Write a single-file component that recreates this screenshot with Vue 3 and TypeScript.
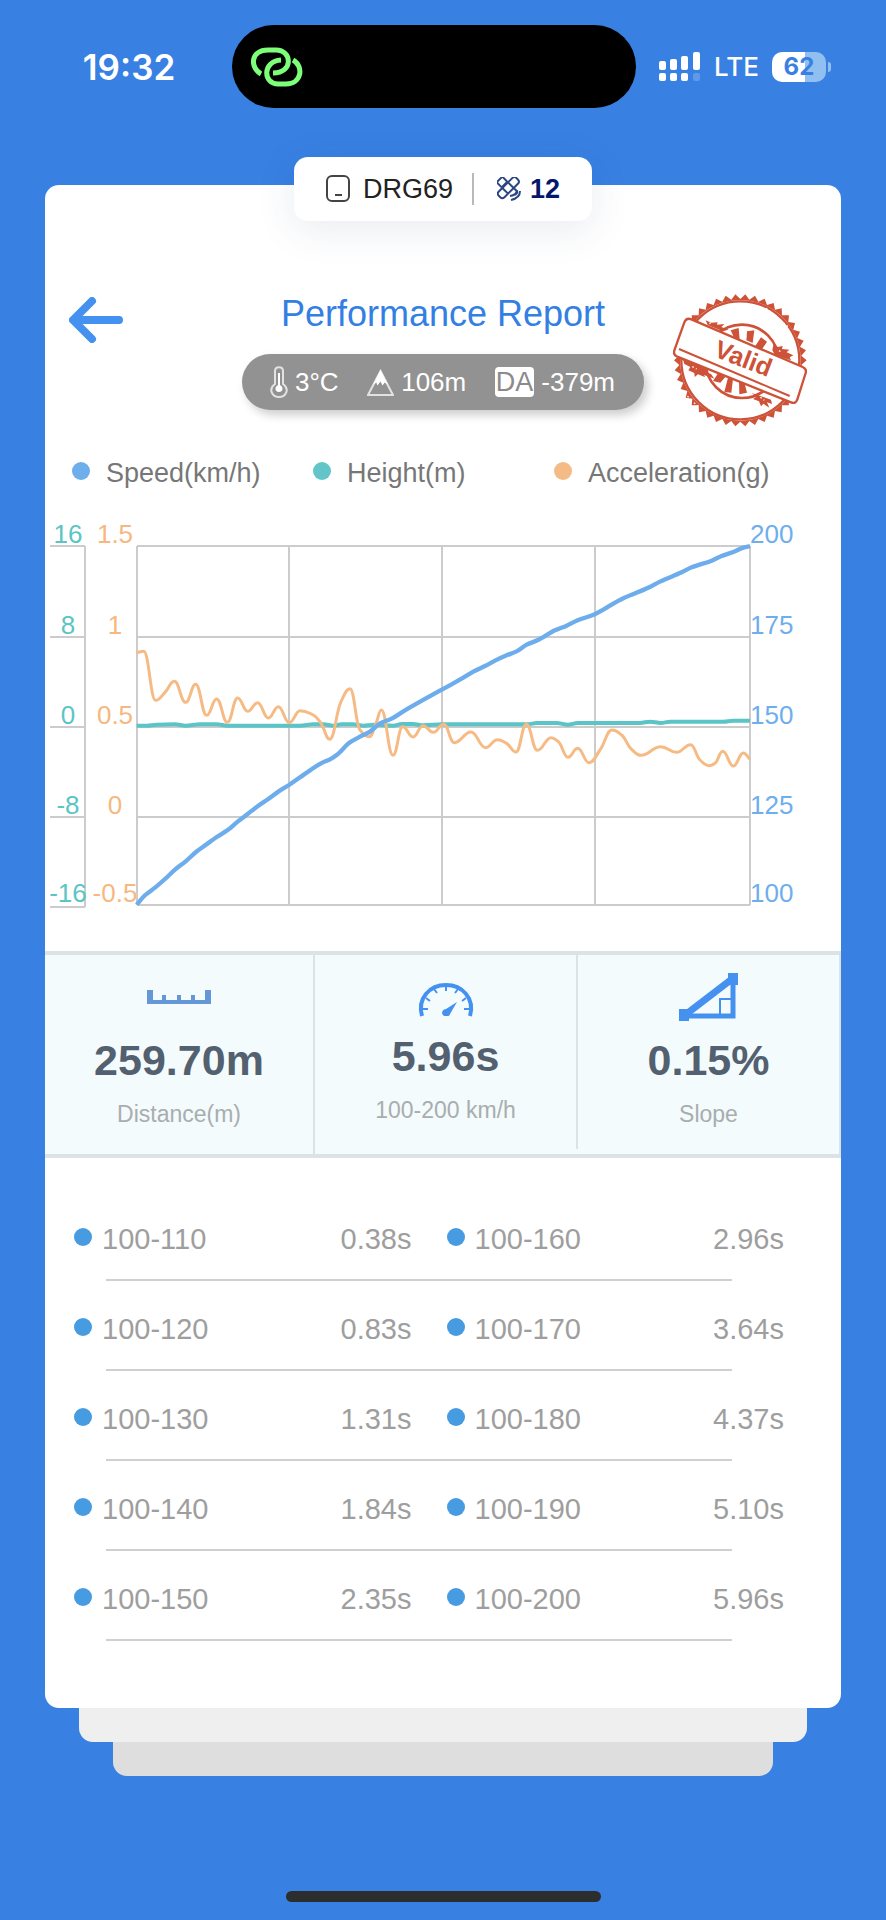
<script setup lang="ts">
interface Split {
  range: string
  time: string
}

const legend = [
  { name: 'Speed(km/h)', tone: 'speed' },
  { name: 'Height(m)', tone: 'height' },
  { name: 'Acceleration(g)', tone: 'accel' },
]

const axisRows = [
  { y: 36, height: '16', accel: '1.5', speed: '200' },
  { y: 127, height: '8', accel: '1', speed: '175' },
  { y: 217, height: '0', accel: '0.5', speed: '150' },
  { y: 307, height: '-8', accel: '0', speed: '125' },
  { y: 395, height: '-16', accel: '-0.5', speed: '100' },
]

const columnLines = [92, 244, 397, 550, 705]

const splits: [Split, Split][] = [
  [{ range: '100-110', time: '0.38s' }, { range: '100-160', time: '2.96s' }],
  [{ range: '100-120', time: '0.83s' }, { range: '100-170', time: '3.64s' }],
  [{ range: '100-130', time: '1.31s' }, { range: '100-180', time: '4.37s' }],
  [{ range: '100-140', time: '1.84s' }, { range: '100-190', time: '5.10s' }],
  [{ range: '100-150', time: '2.35s' }, { range: '100-200', time: '5.96s' }],
]

// Series samples as x, y pairs on a canvas three times finer than the chart grid.
const speed = [
  275, 1184, 301, 1155, 330, 1133, 360, 1107, 390, 1079, 422, 1054, 453, 1026, 485, 1003, 515, 981, 547, 961,
  578, 935, 608, 912, 640, 887, 670, 867, 701, 844, 732, 825, 765, 802, 795, 781, 828, 760, 855, 748, 875, 735,
  915, 697, 945, 680, 975, 665, 1005, 640, 1040, 626, 1075, 604, 1192, 538, 1225, 520, 1255, 503, 1285, 485,
  1320, 468, 1350, 452, 1385, 436, 1413, 425, 1445, 404, 1477, 391, 1530, 361, 1565, 347, 1598, 331, 1649, 313,
  1675, 299, 1705, 281, 1735, 265, 1813, 232, 1845, 215, 1910, 187, 1940, 172, 2000, 152, 2030, 138, 2065, 126,
  2095, 113, 2115, 108,
]
const height = [
  275, 647, 305, 647, 335, 644, 390, 643, 422, 647, 465, 643, 515, 643, 547, 647, 765, 647, 805, 643, 835, 643,
  865, 647, 890, 643, 925, 643, 955, 647, 985, 644, 1045, 647, 1070, 642, 1105, 642, 1135, 646, 1192, 643,
  1450, 643, 1475, 639, 1535, 639, 1569, 644, 1598, 639, 1785, 639, 1815, 635, 1847, 639, 1875, 635, 2035, 635,
  2065, 632, 2115, 632,
]
const accel = [
  275, 428, 296, 424, 332, 571, 360, 547, 388, 514, 422, 577, 452, 523, 485, 616, 515, 567, 547, 637, 578, 564,
  608, 604, 638, 578, 670, 624, 700, 590, 733, 638, 765, 602, 805, 615, 828, 640, 854, 688, 888, 575, 915, 536,
  945, 660, 973, 680, 993, 640, 1009, 600, 1044, 736, 1073, 650, 1104, 681, 1134, 647, 1165, 667, 1196, 643,
  1228, 698, 1278, 666, 1322, 713, 1357, 689, 1385, 700, 1413, 726, 1444, 643, 1477, 721, 1518, 683, 1540, 695,
  1569, 742, 1598, 715, 1632, 758, 1665, 720, 1701, 660, 1730, 675, 1757, 715, 1788, 736, 1847, 710, 1895, 727,
  1937, 704, 1965, 750, 1992, 767, 2010, 760, 2033, 724, 2065, 768, 2095, 729, 2115, 748,
]

// Monotone cubic interpolation, so peaks stay at their samples; a larger reach rounds them more.
function smooth(flat: number[], reach: number): string {
  const n = flat.length / 2
  const x = (i: number) => flat[i * 2]
  const y = (i: number) => flat[i * 2 + 1]
  const slope = (i: number) => (y(i + 1) - y(i)) / (x(i + 1) - x(i))
  const tangent = (i: number): number => {
    if (i === 0) return slope(0)
    if (i === n - 1) return slope(n - 2)
    const a = slope(i - 1)
    const b = slope(i)
    return a * b <= 0 ? 0 : (2 * a * b) / (a + b)
  }
  let d = `M${x(0)} ${y(0)}`
  for (let i = 0; i < n - 1; i++) {
    const h = (x(i + 1) - x(i)) * reach
    d += `C${x(i) + h} ${y(i) + tangent(i) * h} ${x(i + 1) - h} ${y(i + 1) - tangent(i + 1) * h} ${x(i + 1)} ${y(i + 1)}`
  }
  return d
}

const speedPath = smooth(speed, 0.33)
const heightPath = smooth(height, 0.33)
const accelPath = smooth(accel, 0.44)

// Saw-tooth rim of the stamp.
const teeth = Array.from({ length: 84 }, (_, i) => {
  const angle = (i / 84) * Math.PI * 2
  const r = i % 2 ? 184 : 199
  return `${Math.round(238 + r * Math.cos(angle))},${Math.round(240 + r * Math.sin(angle))}`
}).join(' ')
</script>

<template>
  <div class="screen">
    <header class="status">
      <time class="clock">19:32</time>
      <div class="island">
        <svg class="chain" viewBox="0 0 52 40" aria-hidden="true">
          <path d="M10 27C-1 21-1 3 17 3H25C41 3 43 26 22 26" />
          <path d="M30 13C11 14 12 37 27 37H35C51 37 53 19 42 13" />
        </svg>
      </div>
      <div class="signals">
        <svg class="cell-signal" viewBox="0 0 42 30" aria-hidden="true">
          <rect x="0" y="9" width="7" height="9" rx="2" /><rect x="11" y="7" width="7" height="11" rx="2" />
          <rect x="22" y="4" width="7" height="14" rx="2" /><rect x="34" y="0" width="7" height="18" rx="2" />
          <rect x="0" y="21" width="7" height="8" rx="2" /><rect x="11" y="21" width="7" height="8" rx="2" />
          <rect x="22" y="21" width="7" height="8" rx="2" /><rect x="34" y="21" width="7" height="8" rx="2" opacity=".2" />
        </svg>
        <span class="network">LTE</span>
        <span class="battery">62</span>
      </div>
    </header>

    <main class="card">
      <div class="device">
        <svg class="device-icon" viewBox="0 0 24 28" aria-hidden="true">
          <rect x="1" y="1" width="22" height="25" rx="5" /><path d="M9 20H16" />
        </svg>
        <span>DRG69</span>
        <i class="bar"></i>
        <svg class="sat-icon" viewBox="0 0 24 24" aria-hidden="true">
          <g transform="rotate(45 11 11)">
            <rect x="-1" y="7" width="7" height="8" rx="1" />
            <rect x="7" y="-2" width="8" height="25" rx="3" />
            <path d="M7 7H15M7 15H15M15 7H19Q21 7 21 9V11" />
          </g>
          <path d="M20 13Q20 18 13 19M23 14Q23 21 14 23" />
        </svg>
        <strong>12</strong>
      </div>

      <div class="head">
        <button class="back" type="button" aria-label="Back">
          <svg viewBox="0 0 54 46" aria-hidden="true"><path d="M23 4L4 23L23 42M5 23H50" /></svg>
        </button>
        <div class="titles">
          <h1>Performance Report</h1>
          <div class="weather">
            <span class="metric">
              <svg class="temp" viewBox="0 0 18 32" aria-hidden="true">
                <path class="line" d="M5 18V5C5 0 13 0 13 5V18C20 23 16 31 9 31C2 31-2 23 5 18Z" />
                <path class="solid" d="M8 7H10V19C14 21 13 26 9 26C5 26 4 21 8 19Z" />
              </svg>3°C
            </span>
            <span class="metric">
              <svg class="alt" viewBox="0 0 26 26" aria-hidden="true">
                <path class="line" d="M13 2L25 25H1Z" />
                <path class="solid" d="M13 1L20 15L17 13L15 16L13 12L10 16L9 13L6 15Z" />
              </svg>106m
            </span>
            <span class="metric"><abbr>DA</abbr>-379m</span>
          </div>
        </div>
        <svg class="stamp" viewBox="36 38 402 402" role="img" aria-label="Valid">
          <polygon class="red" :points="teeth" />
          <circle class="gap" cx="238" cy="240" r="181" />
          <circle class="ring" cx="238" cy="240" r="177" />
          <circle class="inner" cx="243" cy="243" r="110" />
          <g class="red">
            <path d="M209 150L233 143L236 178L220 174ZM258 153L280 150L275 188L256 180ZM300 171L318 184L301 210L281 200Z" />
            <path d="M171 279L193 290L178 307L156 302ZM201 292L216 296L211 337L190 335ZM234 301L250 306L258 337L235 342Z" />
            <path d="M134 120L151 127L170 126L168 133L190 131L181 140L203 148L189 151L178 150L140 134ZM338 189L350 200L365 197L363 206L385 208L377 216L397 225L386 231L390 240L342 225L334 210Z" />
            <path d="M64 232L110 246L124 262L146 266L134 275L150 281L160 295L140 287L128 285L133 291L111 282L101 290L100 278L82 270L88 260L70 251ZM272 338L330 358L333 371L318 366L325 382L307 370L300 378L294 363L276 356L286 349Z" />
          </g>
          <path class="band" d="M91 117L425 260Q438 266 434 278L409 357Q404 372 390 366L47 228Q36 223 40 210L70 126Q76 111 91 117Z" />
          <path class="rule" d="M54 206L386 347" />
          <text class="word" transform="translate(246 238) rotate(21)" text-anchor="middle" dy="22">Valid</text>
          <path class="wear" d="M315 84L340 104M349 112L381 139M72 338L88 358M99 367L114 380M245 158L258 174M145 130L151 126M354 211L362 216M94 259L107 266M298 351L310 360" />
        </svg>
      </div>

      <ul class="legend">
        <li v-for="item in legend" :key="item.name"><i :class="item.tone"></i>{{ item.name }}</li>
      </ul>

      <svg class="chart" viewBox="0 0 796 410" role="img" aria-label="Speed, height and acceleration chart">
        <g class="grid">
          <path d="M5 36H40M5 127H40M5 217H40M5 307H40M5 397H40M40 36V397" />
          <path v-for="row in axisRows" :key="row.y" :d="`M92 ${row.y}H705`" />
          <path v-for="x in columnLines" :key="x" :d="`M${x} 36V395`" />
        </g>
        <g v-for="row in axisRows" :key="row.speed">
          <text class="t-height" x="23" :y="row.y - 3">{{ row.height }}</text>
          <text class="t-accel" x="70" :y="row.y - 3">{{ row.accel }}</text>
          <text class="t-speed" x="705" :y="row.y - 3">{{ row.speed }}</text>
        </g>
        <svg class="series" width="796" height="410" viewBox="0 0 2388 1230">
          <path class="s-height" :d="heightPath" />
          <path class="s-accel" :d="accelPath" />
          <path class="s-speed" :d="speedPath" />
        </svg>
      </svg>

      <section class="stats">
        <div class="stat">
          <svg viewBox="0 0 64 48" aria-hidden="true">
            <path class="ruler" d="M0 17H6V27H15V22H19V27H30V22H34V27H44V22H48V27H58V17H64V31H0Z" />
          </svg>
          <strong>259.70m</strong>
          <span>Distance(m)</span>
        </div>
        <div class="stat mid">
          <svg viewBox="0 0 64 48" aria-hidden="true">
            <path class="dial" d="M8 43C3 25 16 12 32 12S61 25 56 43" />
            <path class="marks" d="M7 36H14M12 25L16 28M20 16L23 20M32 12V18M44 16L41 20M52 25L48 28M57 36H50" />
            <path class="blue" d="M43 29L36 41Q36 43 34 43H30C26 40 29 36 32 36Z" />
          </svg>
          <strong>5.96s</strong>
          <span>100-200 km/h</span>
        </div>
        <div class="stat">
          <svg viewBox="0 0 64 48" aria-hidden="true">
            <path class="slope" d="M8 42L55 6" />
            <path class="leg" d="M8 43H56V6" />
            <path class="corner" d="M54 26H43V41" />
            <path class="blue" d="M2 36H12V48H2ZM51 0H61V12H51Z" />
          </svg>
          <strong>0.15%</strong>
          <span>Slope</span>
        </div>
      </section>

      <table class="splits" aria-label="Split times">
        <tbody>
          <tr v-for="pair in splits" :key="pair[0].range">
            <template v-for="split in pair" :key="split.range">
              <th scope="row"><i></i>{{ split.range }}</th>
              <td>{{ split.time }}</td>
            </template>
          </tr>
        </tbody>
      </table>
    </main>
    <div class="sheet first"></div>
    <div class="sheet second"></div>
    <div class="home"></div>
  </div>
</template>

<style>
body {
  margin: 0;
  background: #3880e2;
}
</style>

<style scoped>
* {
  box-sizing: border-box;
}
.screen {
  display: flex;
  flex-direction: column;
  min-height: 100vh;
  padding-bottom: 18px;
  background: #3880e2;
  font-family: "Liberation Sans", Arial, sans-serif;
}
.status {
  display: grid;
  grid-template-columns: 232fr 404fr 250fr;
  align-items: center;
  margin-top: 25px;
  color: #fff;
  font-family: Inter, sans-serif;
}
.clock {
  padding-left: 26px;
  font-size: 35px;
  font-weight: 600;
  text-align: center;
}
.island {
  display: flex;
  align-items: center;
  height: 83px;
  padding-left: 19px;
  border-radius: 42px;
  background: #000;
}
.chain {
  width: 52px;
  height: 40px;
  fill: none;
  stroke: #7dff7a;
  stroke-width: 5;
}
.signals {
  display: flex;
  align-items: center;
  gap: 13px;
  padding-left: 23px;
}
.cell-signal {
  width: 42px;
  height: 30px;
  fill: #fff;
}
.network {
  font-size: 26px;
  font-weight: 500;
}
.battery {
  position: relative;
  width: 54px;
  border-radius: 10px;
  background: linear-gradient(90deg, #fff 62%, #91bff0 62%);
  color: #3880e2;
  font-size: 24px;
  font-weight: 700;
  line-height: 30px;
  text-align: center;
}
.battery::after {
  content: "";
  position: absolute;
  top: 10px;
  right: -5px;
  width: 3px;
  height: 10px;
  border-radius: 0 4px 4px 0;
  background: #91bff0;
}
.card {
  position: relative;
  z-index: 3;
  margin: 77px 45px 0;
  padding-bottom: 67px;
  border-radius: 14px;
  background: #fff;
}
.device {
  display: flex;
  align-items: center;
  width: 298px;
  height: 64px;
  margin: -28px auto 0;
  padding-left: 32px;
  border-radius: 14px;
  background: #fff;
  box-shadow: 0 8px 40px rgba(40, 60, 110, 0.1);
  color: #222;
  font-size: 27px;
}
.device-icon {
  width: 24px;
  height: 28px;
  margin-right: 13px;
  fill: none;
  stroke: #444;
  stroke-width: 2;
}
.bar {
  width: 2px;
  height: 32px;
  margin: 0 23px 0 19px;
  background: #b9b9b9;
}
.sat-icon {
  width: 24px;
  height: 24px;
  margin-right: 9px;
  fill: none;
  stroke: #2c4684;
  stroke-width: 2;
  stroke-linejoin: round;
}
.device strong {
  color: #04186b;
}
.head {
  display: grid;
  grid-template-columns: 1fr auto 1fr;
  align-items: start;
  height: 136px;
  margin-top: 72px;
  padding: 0 34px 0 24px;
}
.back {
  height: 46px;
  margin-top: 4px;
  padding: 0;
  border: 0;
  background: none;
  justify-self: start;
}
.back svg {
  display: block;
  width: 54px;
  height: 46px;
  fill: none;
  stroke: #4591f0;
  stroke-width: 8;
  stroke-linecap: round;
  stroke-linejoin: round;
}
.titles {
  padding-left: 10px;
  text-align: center;
}
h1 {
  margin: 0;
  color: #337fe3;
  font-size: 36px;
  font-weight: 400;
  line-height: 42px;
}
.weather {
  display: flex;
  align-items: center;
  justify-content: space-between;
  width: 402px;
  height: 56px;
  margin-top: 19px;
  padding: 0 29px 0 28px;
  border-radius: 28px;
  background: #929292;
  box-shadow: 4px 5px 10px rgba(0, 0, 0, 0.2);
  color: #fff;
  font-size: 26px;
}
.metric {
  display: flex;
  align-items: center;
  gap: 7px;
}
.metric .line {
  fill: none;
  stroke: #e2e2e2;
  stroke-width: 2;
}
.metric .solid {
  fill: #fff;
}
.temp {
  width: 18px;
  height: 32px;
}
.alt {
  width: 27px;
  height: 27px;
}
abbr {
  padding: 0 1px;
  border-radius: 4px;
  background: #fff;
  color: #8b8b8b;
  font-size: 27px;
  line-height: 30px;
}
.stamp {
  justify-self: end;
  width: 134px;
  height: 134px;
}
.red {
  fill: #cd5238;
}
.gap {
  fill: #f3d3cb;
}
.ring {
  fill: #fff;
  stroke: #cd5238;
  stroke-width: 7;
}
.inner {
  fill: none;
  stroke: #cd5238;
  stroke-width: 8;
}
.band {
  fill: #fff;
  stroke: #cd5238;
  stroke-width: 7;
}
.rule {
  stroke: #cd5238;
  stroke-width: 6;
}
.word {
  fill: #cd5238;
  font-size: 76px;
  font-weight: 700;
}
.wear {
  fill: none;
  stroke: #fff;
  stroke-width: 4;
  stroke-dasharray: 5 7;
}
.legend {
  display: grid;
  grid-template-columns: repeat(3, 241px);
  margin: 28px 0 0;
  padding: 0 0 0 27px;
  color: #777;
  font-size: 27px;
  line-height: 32px;
  list-style: none;
}
.legend li {
  display: flex;
  white-space: nowrap;
}
.legend i {
  width: 18px;
  height: 18px;
  margin: 5px 16px 0 0;
  border-radius: 50%;
}
.speed {
  background: #6eaeea;
}
.height {
  background: #62c5c7;
}
.accel {
  background: #f5bb87;
}
.chart {
  display: block;
  width: 100%;
  margin-top: 21px;
  font-size: 26px;
}
.grid path {
  fill: none;
  stroke: #ccc;
  stroke-width: 2;
}
.t-height {
  fill: #5bc5c5;
  text-anchor: middle;
}
.t-accel {
  fill: #f6b880;
  text-anchor: middle;
}
.t-speed {
  fill: #6eaeed;
}
.series path {
  fill: none;
  stroke-linejoin: round;
}
.series .s-height {
  stroke: #5bc4c6;
  stroke-width: 12;
}
.series .s-accel {
  stroke: #f6bb85;
  stroke-width: 9;
}
.series .s-speed {
  stroke: #6dadec;
  stroke-width: 13;
}
.stats {
  display: grid;
  grid-template-columns: 270fr 263fr 263fr;
  height: 207px;
  margin-top: 31px;
  border: solid #dce3e6;
  border-width: 4px 0;
  background: #f3fbfd;
}
.stat {
  display: flex;
  flex-direction: column;
  align-items: center;
  padding-top: 18px;
  border-right: 2px solid #dce3e6;
}
.stat svg {
  width: 64px;
  height: 48px;
  margin-bottom: 14px;
}
.stat.mid {
  margin-bottom: 5px;
}
.stat.mid svg {
  margin-bottom: 10px;
}
.stat strong {
  color: #53606f;
  font-size: 43px;
  line-height: 50px;
}
.stat span {
  margin-top: 15px;
  color: #a9adae;
  font-size: 23px;
  line-height: 28px;
}
.ruler {
  fill: #6497d7;
}
.blue {
  fill: #4591f0;
}
.dial {
  fill: none;
  stroke: #4591f0;
  stroke-width: 4;
}
.marks {
  stroke: #4591f0;
  stroke-width: 2;
}
.slope {
  stroke: #4591f0;
  stroke-width: 7;
}
.leg {
  fill: none;
  stroke: #4591f0;
  stroke-width: 5;
}
.corner {
  fill: none;
  stroke: #4591f0;
  stroke-width: 2;
}
.splits {
  display: block;
  margin-top: 33px;
  padding: 0 57px 0 29px;
  color: #9e9e9e;
  font-size: 29px;
  line-height: 34px;
}
.splits tbody {
  display: block;
}
.splits tr {
  display: grid;
  grid-template-columns: 1fr auto 35px 1fr auto;
  height: 90px;
  padding-top: 31px;
}
.splits tr::after {
  content: "";
  grid-column: 1 / -1;
  grid-row: 2;
  height: 2px;
  margin: 23px 52px 0 32px;
  background: #d0d0d0;
}
.splits th {
  display: flex;
  padding: 0;
  font-weight: 400;
}
.splits td {
  padding: 0;
}
.splits th:nth-of-type(2) {
  grid-column: 4;
}
.splits i {
  width: 18px;
  height: 18px;
  margin: 6px 10px 0 0;
  border-radius: 50%;
  background: #479be1;
}
.sheet {
  position: relative;
  height: 48px;
  margin-top: -14px;
  border-radius: 0 0 14px 14px;
}
.first {
  z-index: 2;
  margin-right: 79px;
  margin-left: 79px;
  background: #efefef;
}
.second {
  z-index: 1;
  margin-right: 113px;
  margin-left: 113px;
  background: #dedede;
}
.home {
  width: 315px;
  height: 11px;
  margin: auto auto 0;
  border-radius: 6px;
  background: #2c2e2e;
}
</style>
